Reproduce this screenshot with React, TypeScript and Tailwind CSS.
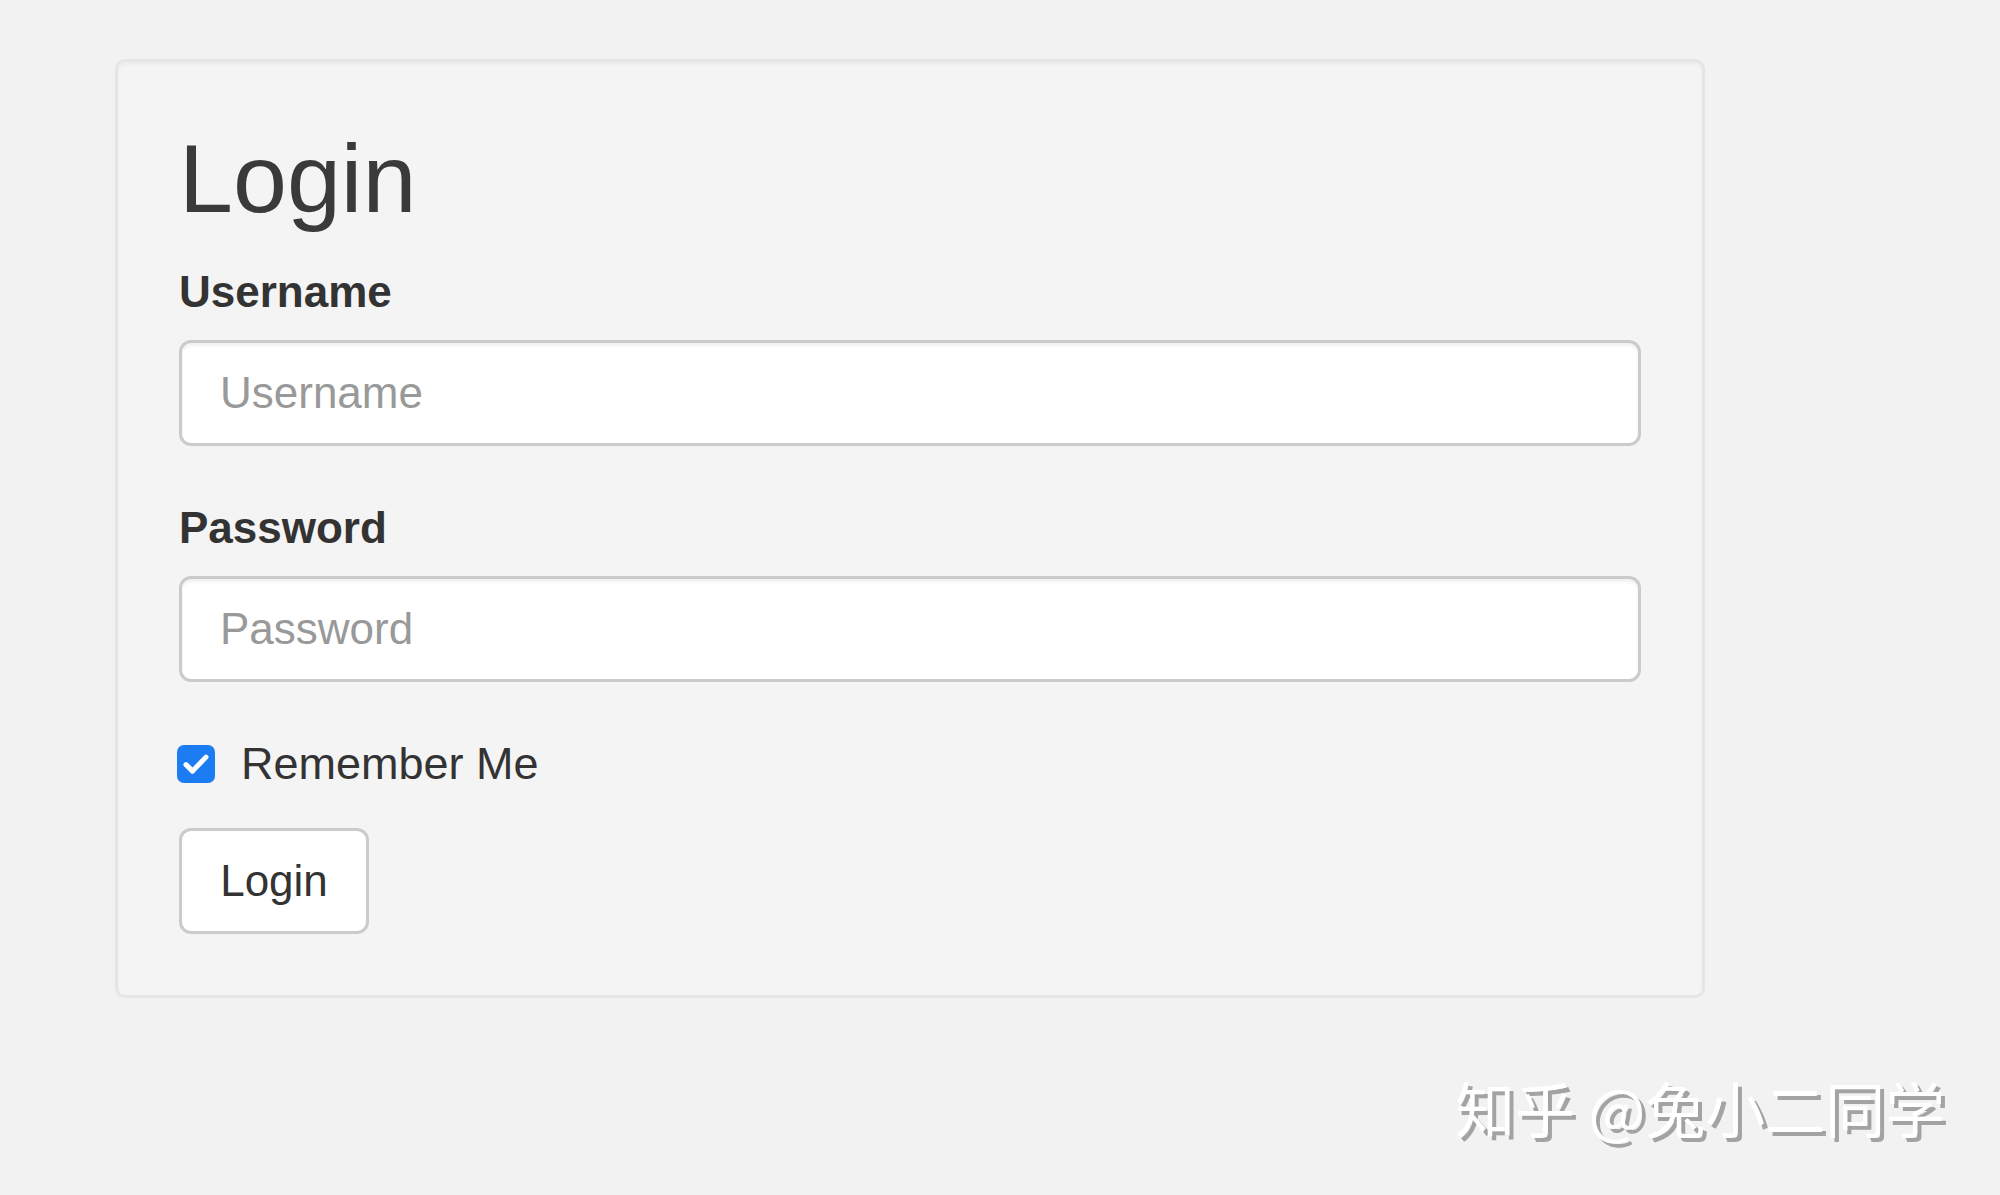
import { useState } from "react";

export default function App() {
  const [remember, setRemember] = useState<boolean>(true);

  return (
    <div className="relative h-[1195px] w-full bg-[#f2f2f2] pl-[115px] pt-[59px] font-['Liberation_Sans',Arial,sans-serif] text-[#333]">
      {/* well */}
      <div className="w-[1590px] rounded-[10px] border-[3px] border-[#e5e5e5] bg-[#f4f4f4] p-[61px] shadow-[inset_0_3px_3px_rgba(0,0,0,0.03)]">
        <h1 className="mt-[2px] text-[97px] font-normal leading-[107px] text-[#3a3a3a]">Login</h1>

        <form className="flex flex-col" onSubmit={(e) => e.preventDefault()}>
          <label htmlFor="username" className="mt-[28px] text-[44px] font-bold leading-[63px]">
            Username
          </label>
          <input
            id="username"
            type="text"
            placeholder="Username"
            className="mt-[17px] h-[106px] w-full rounded-[12px] border-[3px] border-[#cbcbcb] bg-white px-[38px] text-[44px] shadow-[inset_0_3px_3px_rgba(0,0,0,0.06)] outline-none placeholder:text-[#999]"
          />

          <label htmlFor="password" className="mt-[50px] text-[44px] font-bold leading-[63px]">
            Password
          </label>
          <input
            id="password"
            type="password"
            placeholder="Password"
            className="mt-[17px] h-[106px] w-full rounded-[12px] border-[3px] border-[#cbcbcb] bg-white px-[38px] text-[44px] shadow-[inset_0_3px_3px_rgba(0,0,0,0.06)] outline-none placeholder:text-[#999]"
          />

          <label className="mt-[50px] flex h-[64px] cursor-pointer items-center gap-[26px] text-[45px] leading-[64px]">
            <span
              onClick={() => setRemember(!remember)}
              className={
                remember
                  ? "ml-[-2px] flex h-[38px] w-[38px] items-center justify-center rounded-[7px] bg-[#1b7cf4]"
                  : "ml-[-2px] flex h-[38px] w-[38px] items-center justify-center rounded-[7px] border-[3px] border-[#bbb] bg-white"
              }
            >
              {remember && (
                <svg width="30" height="30" viewBox="0 0 24 24" fill="none">
                  <path d="M4 12.5l5.2 5.2L20 6.5" stroke="white" strokeWidth="4" strokeLinecap="round" strokeLinejoin="round" />
                </svg>
              )}
            </span>
            <span className="text-[#333]">Remember Me</span>
          </label>

          <div className="mt-[32px]">
            <button
              type="submit"
              className="h-[106px] w-[190px] rounded-[12px] border-[3px] border-[#cbcbcb] bg-white text-[44px] text-[#333]"
            >
              Login
            </button>
          </div>
        </form>
      </div>

      {/* watermark */}
      <div className="absolute left-[1455px] top-[1065px] font-['Noto_Sans_CJK_SC','Liberation_Sans',sans-serif] text-[60px] leading-[84px] text-white [text-shadow:4px_4px_0_#a3a3a3]">
        知乎 @兔小二同学
      </div>
    </div>
  );
}
